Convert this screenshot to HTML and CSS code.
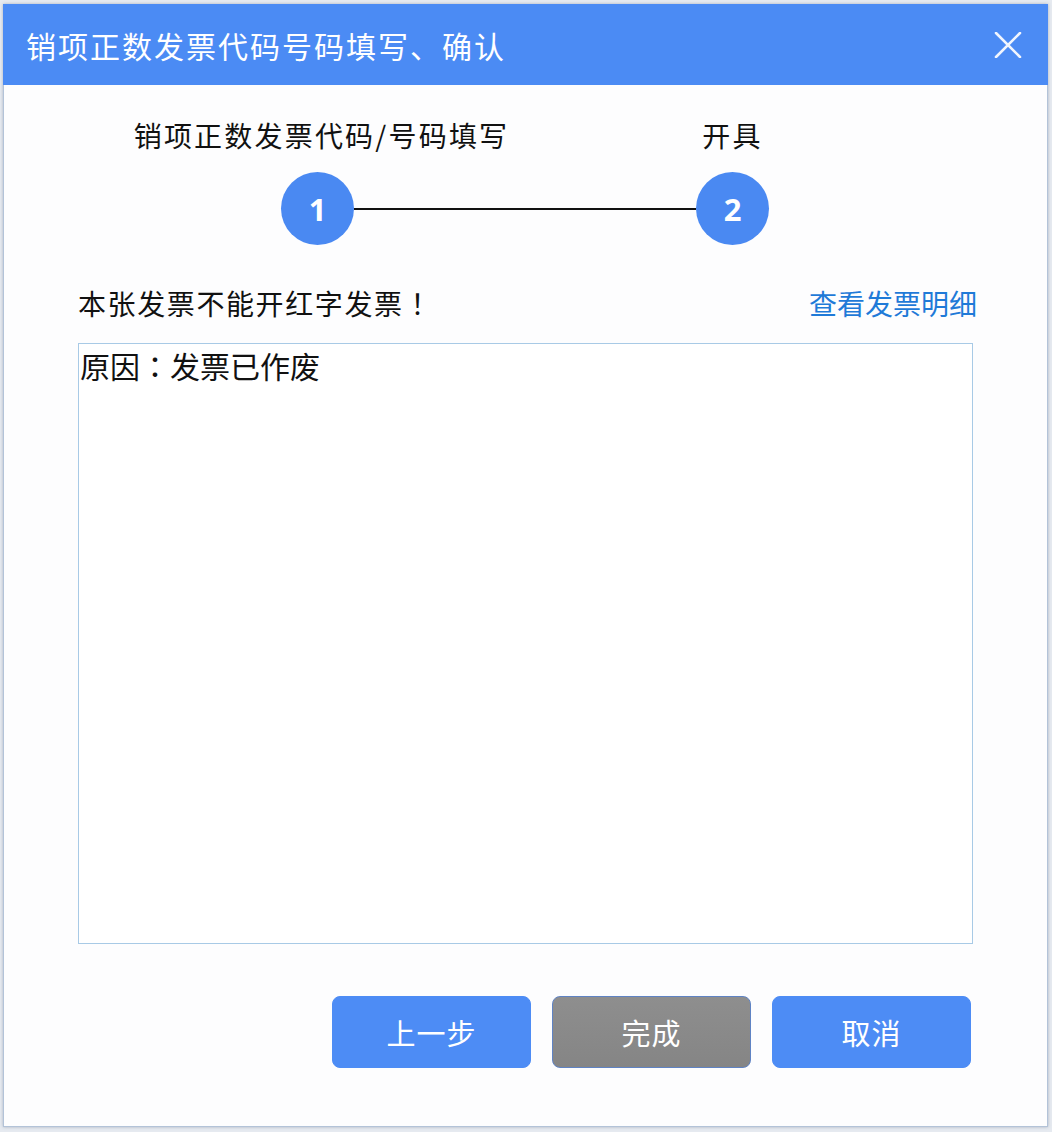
FILE: index.html
```html
<!DOCTYPE html>
<html lang="zh-CN">
<head>
<meta charset="utf-8">
<title>销项正数发票代码号码填写、确认</title>
<link rel="stylesheet" href="styles.css">
</head>
<body>
<div class="dialog">
  <div class="dialog-header">
    <div class="dialog-title">销项正数发票代码号码填写、确认</div>
    <svg class="close" width="28" height="26" viewBox="0 0 28 26" aria-label="关闭">
      <path d="M2 1 L26 25 M26 1 L2 25" stroke="#ffffff" stroke-width="2.6" stroke-linecap="round" fill="none"/>
    </svg>
  </div>
  <div class="dialog-body">
    <div class="steps">
      <div class="step">
        <div class="step-label step-label-first">销项正数发票代码/号码填写</div>
        <div class="step-circle">1</div>
      </div>
      <div class="step-line"></div>
      <div class="step">
        <div class="step-label">开具</div>
        <div class="step-circle">2</div>
      </div>
    </div>
    <div class="message-row">
      <div class="message">本张发票不能开红字发票<span class="punct" lang="ja">！</span></div>
      <a class="detail-link">查看发票明细</a>
    </div>
    <div class="reason-box">原因<span class="punct" lang="ja">：</span>发票已作废</div>
    <div class="buttons">
      <button class="btn btn-blue">上一步</button>
      <button class="btn btn-grey">完成</button>
      <button class="btn btn-blue">取消</button>
    </div>
  </div>
</div>
</body>
</html>
```

FILE: styles.css
```css
html, body {
  margin: 0;
  padding: 0;
}
body {
  background: #e6eaf0;
  padding: 4px 0 0 3px;
  height: 1132px;
  box-sizing: border-box;
  font-family: "Noto Sans CJK SC", "Noto Sans", sans-serif;
  overflow: hidden;
}
.dialog {
  width: 1045px;
  height: 1123px;
  box-sizing: border-box;
  background: #fdfdfe;
  border: 1px solid #b3c3d8;
  border-top: none;
  box-shadow: 0 0 3px rgba(60, 80, 110, 0.35);
  display: flex;
  flex-direction: column;
}
.dialog-header {
  height: 81px;
  background: #4b8bf4;
  display: flex;
  align-items: center;
  justify-content: space-between;
  padding: 0 26px 0 23px;
  margin: 0 -1px;
}
.dialog-title {
  color: #ffffff;
  font-size: 30px;
  letter-spacing: 2px;
  line-height: 40px;
  font-weight: 400;
}
.close {
  display: block;
  opacity: 0.92;
}
.dialog-body {
  padding: 0 74px;
  display: flex;
  flex-direction: column;
}
.steps {
  display: flex;
  align-items: flex-end;
  margin: 32px 0 0 203px;
}
.step {
  width: 73px;
  display: flex;
  flex-direction: column;
  align-items: center;
}
.step-label {
  white-space: nowrap;
  font-size: 28px;
  letter-spacing: 2.2px;
  line-height: 36px;
  color: #111111;
  margin-bottom: 19px;
}
.step-label-first {
  margin-left: 8px;
}
.step-circle {
  width: 73px;
  height: 73px;
  border-radius: 50%;
  background: #4a89f2;
  color: #ffffff;
  font-family: "Open Sans", "Noto Sans", sans-serif;
  font-weight: 700;
  font-size: 31px;
  display: flex;
  align-items: center;
  justify-content: center;
}
.step-line {
  width: 342px;
  height: 2px;
  background: #111111;
  margin-bottom: 35px;
}
.message-row {
  display: flex;
  justify-content: space-between;
  align-items: center;
  margin-top: 40px;
  height: 36px;
}
.message {
  font-size: 28px;
  letter-spacing: 1.6px;
  line-height: 36px;
  color: #111111;
}
.punct {
  font-family: "Noto Sans CJK JP", "Noto Sans CJK SC", sans-serif;
}
.detail-link {
  font-size: 28px;
  line-height: 36px;
  color: #1f7ad8;
  margin-right: -4px;
  cursor: pointer;
}
.reason-box {
  margin-top: 22px;
  height: 601px;
  box-sizing: border-box;
  border: 1px solid #a8cae6;
  padding: 1px 0 0 1px;
  font-size: 30px;
  line-height: 40px;
  color: #111111;
  background: #ffffff;
}
.buttons {
  display: flex;
  justify-content: flex-end;
  gap: 21px;
  margin-top: 52px;
  padding-right: 2px;
}
.btn {
  width: 199px;
  height: 72px;
  border-radius: 8px;
  font-family: "Noto Sans CJK SC", "Noto Sans", sans-serif;
  font-size: 29px;
  letter-spacing: 1px;
  color: #ffffff;
  cursor: pointer;
  padding: 0;
}
.btn-blue {
  background: #4d8cf5;
  border: 1px solid #4d8cf5;
}
.btn-grey {
  background: linear-gradient(#8e8e8e, #858585);
  border: 1px solid #5f83c4;
}
```
